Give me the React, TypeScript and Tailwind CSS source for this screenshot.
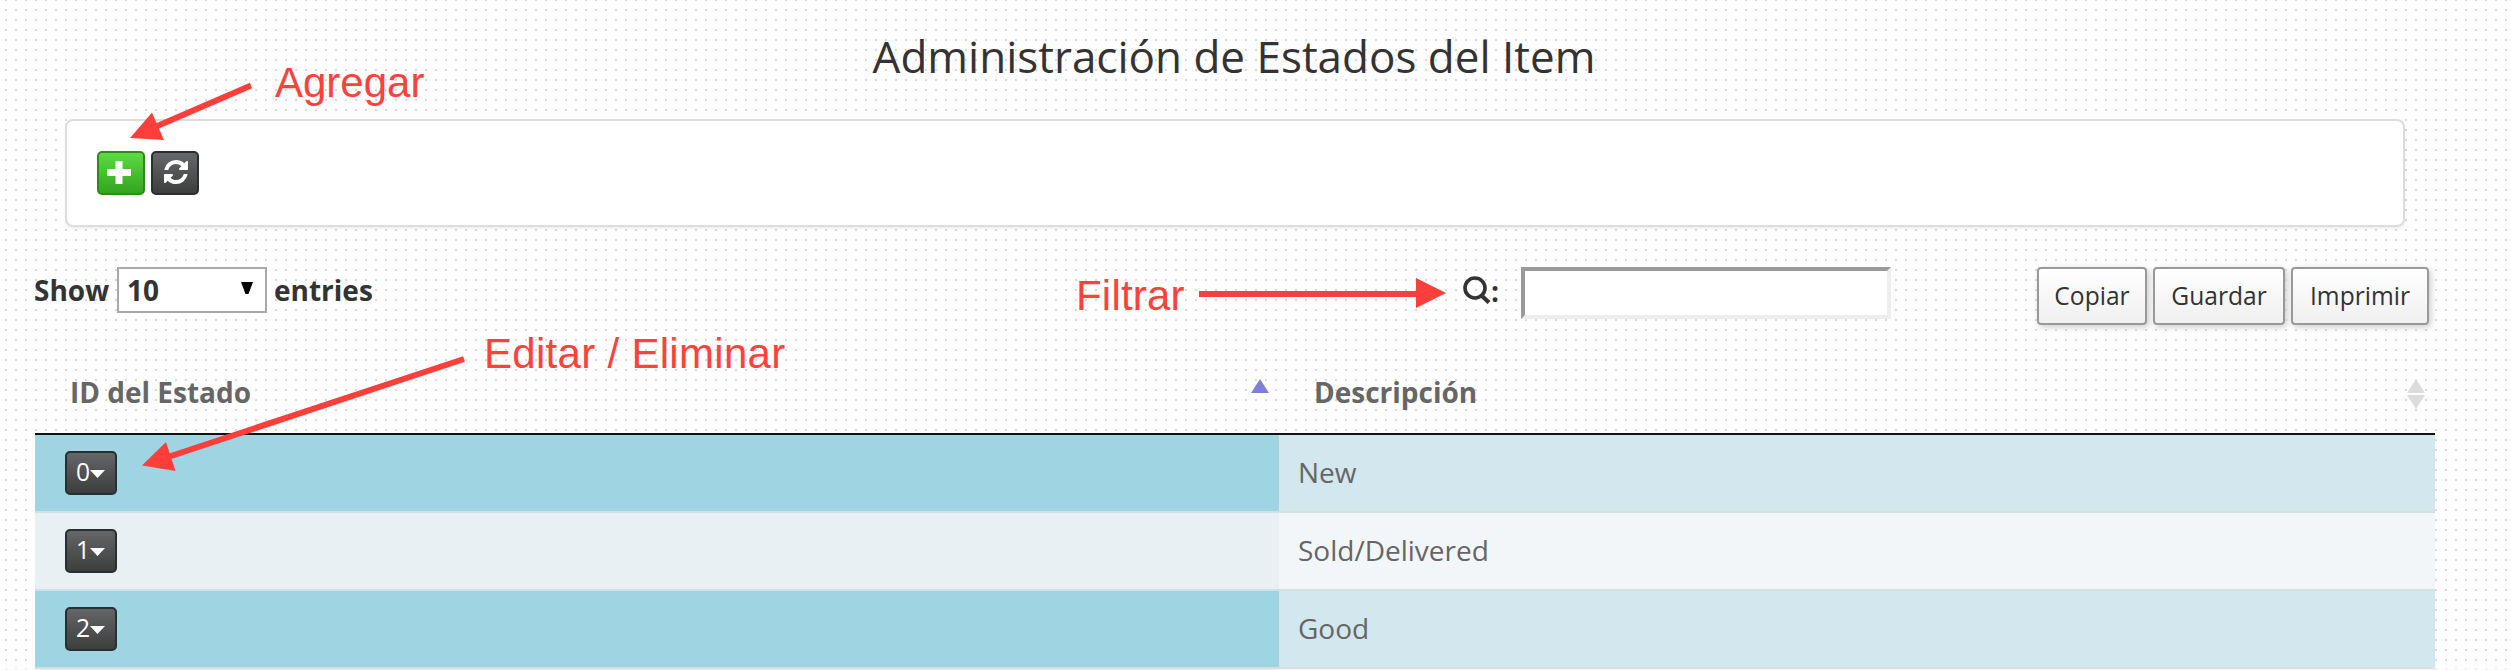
import React from "react";

const ROWS = [
  { id: "0", text: "New" },
  { id: "1", text: "Sold/Delivered" },
  { id: "2", text: "Good" },
];

function PlusIcon() {
  return (
    <svg viewBox="0 0 24 24" className="h-6 w-6 -translate-x-0.5 translate-y-px" fill="#fff">
      <path d="M8.500 0h7v8H24v7h-8.500v8h-7v-8H0V8h8.500z" />
    </svg>
  );
}

function RefreshIcon() {
  return (
    <svg viewBox="0 0 1792 1792" className="h-7 w-7 translate-x-px" fill="#fff">
      <path d="M1639 1056q0 5-1 7-64 268-268 434.5t-478 166.5q-146 0-282.5-55t-243.5-157l-129 129q-19 19-45 19t-45-19-19-45v-448q0-26 19-45t45-19h448q26 0 45 19t19 45-19 45l-137 137q71 66 161 102t187 36q134 0 250-65t186-179q11-17 53-117 8-23 30-23h192q13 0 22.5 9.5t9.5 22.5zm25-800v448q0 26-19 45t-45 19h-448q-26 0-45-19t-19-45 19-45l138-138q-148-137-349-137-134 0-250 65t-186 179q-11 17-53 117-8 23-30 23h-199q-13 0-22.5-9.5t-9.5-22.5v-7q65-268 270-434.5t480-166.5q146 0 284 55.5t245 156.5l130-129q19-19 45-19t45 19 19 45z" />
    </svg>
  );
}

function SearchIcon() {
  return (
    <svg viewBox="0 0 29 28" className="h-7 w-[29px]" fill="none" stroke="#333">
      <circle cx="13" cy="12" r="10" strokeWidth="3.6" />
      <path d="M20 20l7 6.500" strokeWidth="4.2" />
    </svg>
  );
}

function ToolButton({ label, className }: { label: string; className: string }) {
  return (
    <button className={`h-[58px] rounded-[4px] border-2 border-[#999] bg-linear-to-b from-white to-[#f0f0f0] text-[24.6px] text-[#333] shadow-[2px_2px_6px_#ccc] ${className}`}>
      {label}
    </button>
  );
}

function Annotations() {
  return (
    <div className="pointer-events-none absolute inset-0 font-['Liberation_Sans',Arial,sans-serif] text-[42px] leading-[48px] text-[#fc423d]">
      <svg width="2511" height="670" className="absolute inset-0" fill="#fc3f3b" stroke="#fc3f3b">
        <path d="M251 85.500L155 127" strokeWidth="6" />
        <path d="M130 138l22-25.500 12 27.500z" stroke="none" />
        <path d="M464 359L168 457" strokeWidth="6" />
        <path d="M142 465.500l24-23.500 9.500 29z" stroke="none" />
        <path d="M1199 294H1418" strokeWidth="6" />
        <path d="M1446 293l-30-15v30z" stroke="none" />
      </svg>
      <span className="absolute top-[59px] left-[275px]">Agregar</span>
      <span className="absolute top-[272px] left-[1076px] tracking-[0.2px]">Filtrar</span>
      <span className="absolute top-[330px] left-[484px] tracking-[0.3px] whitespace-nowrap">Editar / Eliminar</span>
    </div>
  );
}

export default function App() {
  return (
    <div className="relative h-[670px] w-[2511px] overflow-hidden bg-[linear-gradient(to_right,#fefefe_8px,transparent_8px),linear-gradient(#d9d9d9_2px,#fefefe_2px)] bg-[length:10px_10px] bg-[position:-3px_0,0_9px] font-['Open_Sans',sans-serif] text-[28px] text-[#333]">
      <h1 className="h-[119px] pt-[23px] pr-[43px] text-center text-[44px] leading-[66px]">Administración de Estados del Item</h1>

      <div className="ml-[65px] flex h-[108px] w-[2340px] items-start gap-1.5 rounded-lg border-2 border-[#ddd] bg-white pt-[30px] pl-[30px] shadow-[0_2px_2px_rgba(0,0,0,0.05)]">
        <button className="flex h-11 w-12 items-center justify-center rounded-[5px] border-2 border-[#2f8a1e] bg-linear-to-b from-[#5cdb41] to-[#34a41f] pb-0.5">
          <PlusIcon />
        </button>
        <button className="flex h-11 w-12 items-center justify-center rounded-[5px] border-2 border-[#2b2d2e] bg-linear-to-b from-[#666869] to-[#3d3e3e] pb-0.5">
          <RefreshIcon />
        </button>
      </div>

      <div className="mt-10 flex h-[58px] items-start pl-[35px] font-bold">
        <div className="flex h-[46px] w-[1427px] items-center">
          <span className="-ml-px w-[83px]">Show</span>
          <div className="flex h-[46px] w-[150px] items-center justify-between border-2 border-[#a9a9a9] bg-white pr-3 pl-2">
            <span>10</span>
            <svg viewBox="0 0 12 12" className="mb-1 h-3 w-3"><path d="M0 0h12L7.500 12h-3z" fill="#000" /></svg>
          </div>
          <span className="ml-[7px]">entries</span>
        </div>
        <div className="flex w-[59px] pt-[9px]">
          <SearchIcon />
          <span className="-mt-1 leading-[38px]">:</span>
        </div>
        <input className="h-[52px] w-[370px] border-4 border-t-[#9a9a9a] border-r-[#eee] border-b-[#eee] border-l-[#9a9a9a] bg-white px-2 outline-none" />
        <div className="ml-[146px] flex gap-1.5 font-normal">
          <ToolButton label="Copiar" className="w-[110px]" />
          <ToolButton label="Guardar" className="w-[132px]" />
          <ToolButton label="Imprimir" className="w-[138px]" />
        </div>
      </div>

      <div className="ml-[35px] w-[2400px] text-[#666]">
        <div className="flex h-[110px] border-b-2 border-[#111] leading-[38px] font-bold">
          <div className="flex w-[1244px] justify-between pt-12 pr-[10px] pl-[35px]">
            <span>ID del Estado</span>
            <svg viewBox="0 0 18 14" className="mt-1.5 h-3.5 w-[18px]"><path d="M9 0l9 14H0z" fill="#8080d8" /></svg>
          </div>
          <div className="flex flex-1 justify-between pt-12 pr-[10px] pl-[35px]">
            <span>Descripción</span>
            <svg viewBox="0 0 18 30" className="mt-1.5 h-[30px] w-[18px]"><path d="M9 0l9 14H0zM0 16h18L9 30z" fill="#dcdcdc" /></svg>
          </div>
        </div>
        {ROWS.map((r, i) => (
          <div key={r.id} className="flex h-[78px]">
            <div className={`w-[1244px] border-b-2 border-[#d3dfe4] pt-4 pl-[30px] ${i % 2 === 0 ? "bg-[#9fd4e2]" : "bg-[#e8f0f3]"}`}>
              <button className="flex h-11 w-[52px] items-center rounded-[5px] border-2 border-[#2a2f31] bg-linear-to-b from-[#646667] to-[#3d3e3e] pb-0.5 pl-[9px] text-[24.600px] text-white">
                {r.id}
                <svg viewBox="0 0 15 8" className="mt-1 h-2 w-[15px]"><path d="M0 0h15L7.500 8z" fill="#fff" /></svg>
              </button>
            </div>
            <div className={`flex-1 border-b-2 border-[#d8dfe2] pt-[18px] pl-[19px] leading-[38px] ${i % 2 === 0 ? "bg-[#d2e8ee]" : "bg-[#f2f6f9]"}`}>{r.text}</div>
          </div>
        ))}
        <div className="flex h-[78px]">
          <div className="w-[1244px] bg-[#e8f0f3]" />
          <div className="flex-1 bg-[#f2f6f9]" />
        </div>
      </div>
      <Annotations />
    </div>
  );
}
